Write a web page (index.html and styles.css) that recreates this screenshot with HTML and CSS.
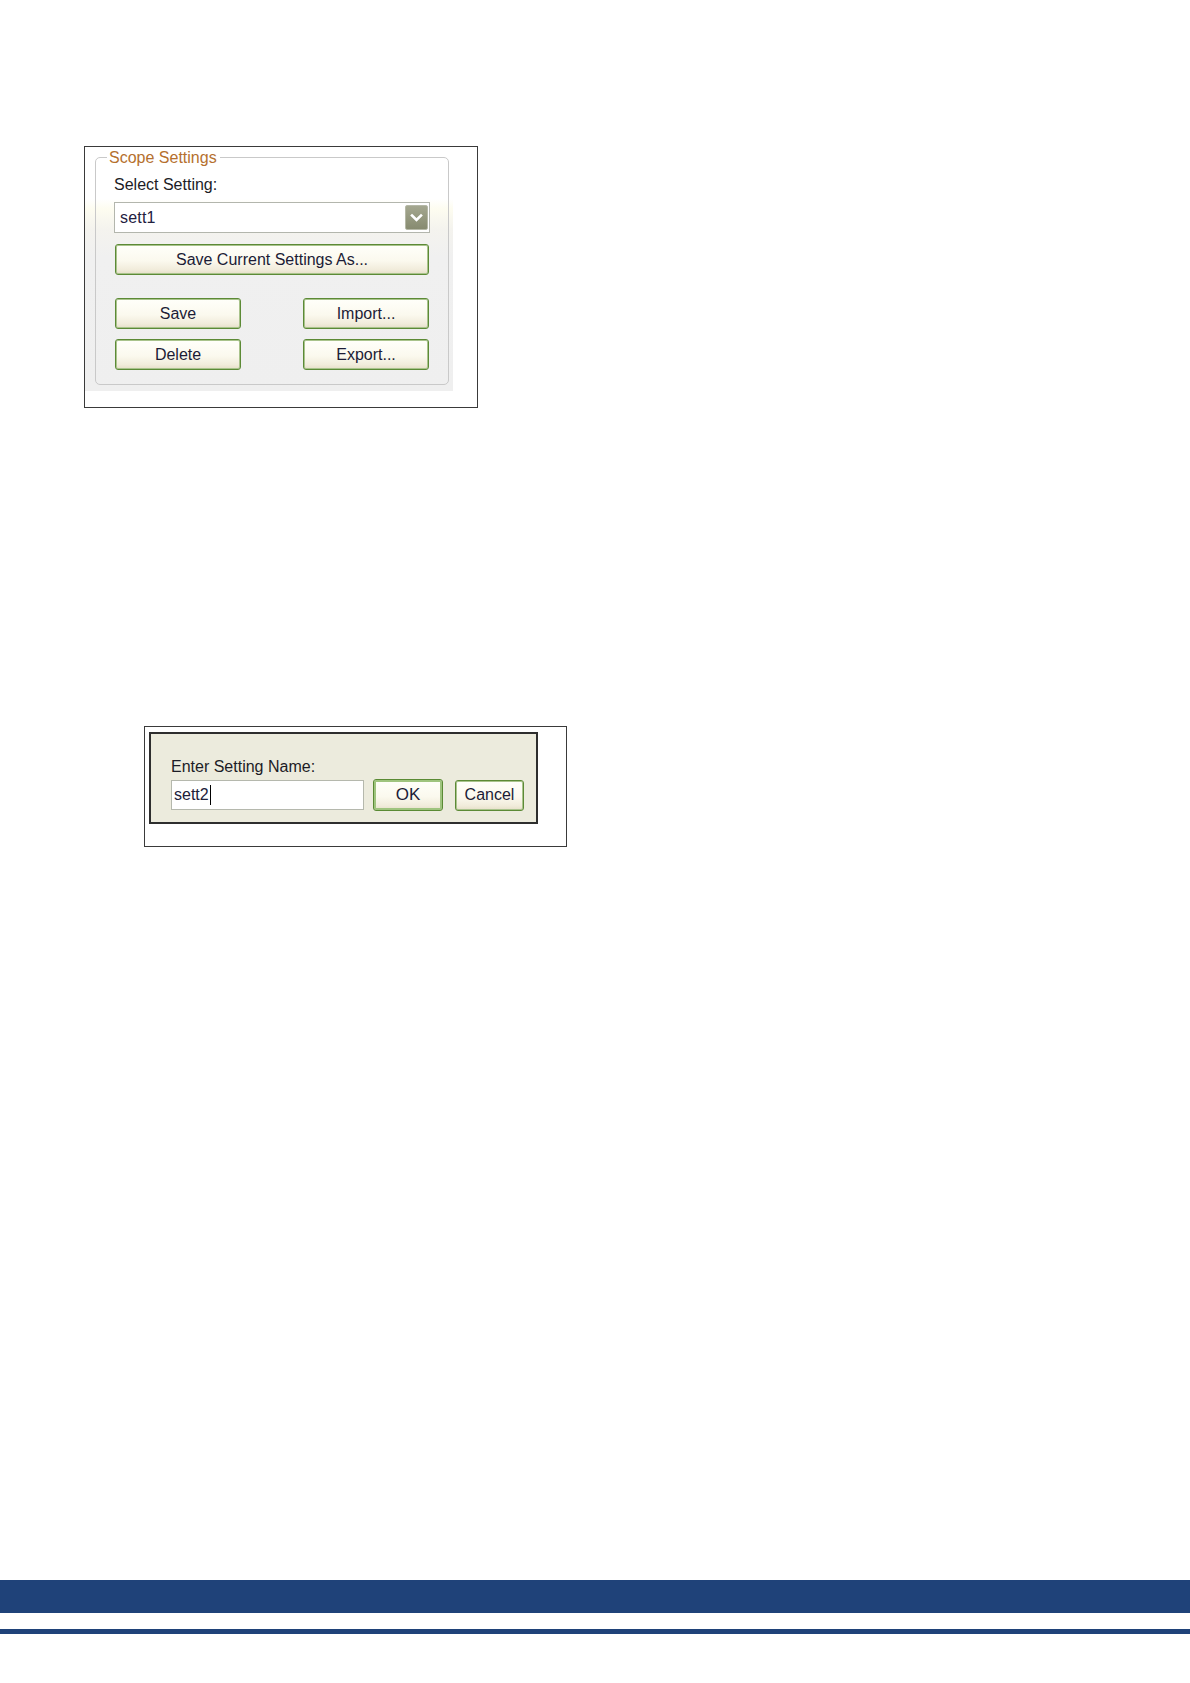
FILE: index.html
```html
<!DOCTYPE html>
<html>
<head>
<meta charset="utf-8">
<link rel="stylesheet" href="styles.css">
</head>
<body>
<div class="page">
  <div class="frame frame-scope">
    <div class="panel">
      <div class="group">
        <span class="legend">Scope Settings</span>
        <div class="label">Select Setting:</div>
        <div class="combo">
          <span class="combo-text">sett1</span>
          <span class="combo-btn">
            <svg width="13" height="10" viewBox="0 0 13 10"><path d="M2 2.5 L6.5 7 L11 2.5" fill="none" stroke="#ffffff" stroke-width="2.6" stroke-linecap="square"/></svg>
          </span>
        </div>
        <div class="btn btn-wide">Save Current Settings As...</div>
        <div class="btn-grid">
          <div class="btn">Save</div>
          <div class="btn">Import...</div>
          <div class="btn">Delete</div>
          <div class="btn">Export...</div>
        </div>
      </div>
    </div>
  </div>

  <div class="frame frame-name">
    <div class="dialog">
      <div class="label">Enter Setting Name:</div>
      <div class="name-row">
        <div class="input"><span>sett2</span><span class="caret"></span></div>
        <div class="btn btn-ok">OK</div>
        <div class="btn btn-cancel">Cancel</div>
      </div>
    </div>
  </div>
</div>
<div class="footer-bar"></div>
<div class="footer-line"></div>
</body>
</html>
```

FILE: styles.css
```css
html, body {
  margin: 0;
  padding: 0;
  background: #ffffff;
}

body {
  font-family: "Liberation Sans", Arial, sans-serif;
  font-size: 16px;
  color: #1e1e30;
}

.page {
  padding-top: 146px;
  height: 1580px;
  box-sizing: border-box;
}

.frame {
  border: 1px solid #3a3a3a;
  box-sizing: border-box;
}

.frame-scope {
  margin-left: 84px;
  width: 394px;
  height: 262px;
}

.panel {
  width: 368px;
  box-sizing: border-box;
  padding: 10px 4px 6px 10px;
  background: linear-gradient(to bottom, #ffffff 0, #ffffff 52px, #fdfcf0 62px, #f4f3ee 82px, #f0f0f0 110px, #efefef 100%);
}

.group {
  position: relative;
  width: 354px;
  box-sizing: border-box;
  border: 1px solid #c9c9c9;
  border-radius: 5px;
  padding: 17px 0 14px 18px;
}

.legend {
  position: absolute;
  left: 11px;
  top: -9px;
  padding: 0 3px 0 2px;
  background: #ffffff;
  color: #b5702e;
  line-height: 18px;
}

.label {
  line-height: 20px;
  color: #1c1c26;
}

.combo {
  margin-top: 7px;
  width: 316px;
  height: 31px;
  box-sizing: border-box;
  border: 1px solid #b3b6ad;
  background: #ffffff;
  display: flex;
  align-items: center;
  justify-content: space-between;
  padding: 0 1px 0 5px;
}

.combo-text {
  color: #22203e;
  letter-spacing: 0.2px;
}

.combo-btn {
  width: 23px;
  height: 25px;
  box-sizing: border-box;
  border: 1px solid #b5b8a6;
  border-radius: 2px;
  background: linear-gradient(to bottom, #a4a78f, #878b70);
  display: flex;
  align-items: center;
  justify-content: center;
}

.btn {
  box-sizing: border-box;
  height: 31px;
  border: 1px solid #5c8a36;
  box-shadow: inset 0 0 0 1px #a9c38c;
  border-radius: 3px;
  background: linear-gradient(to bottom, #fffffa 0, #fbf9ee 55%, #f1ecdb 85%, #e6dfc8 100%);
  display: flex;
  align-items: center;
  justify-content: center;
  color: #1c1c36;
}

.btn-wide {
  margin: 11px 0 0 1px;
  width: 314px;
}

.btn-grid {
  margin: 23px 0 0 1px;
  display: grid;
  grid-template-columns: 126px 126px;
  column-gap: 62px;
  row-gap: 10px;
}

.frame-name {
  margin-top: 318px;
  margin-left: 144px;
  width: 423px;
  height: 121px;
  padding: 5px 0 0 4px;
}

.dialog {
  width: 389px;
  height: 92px;
  box-sizing: border-box;
  border: 2px solid #2e2e2e;
  background: #ecebdd;
  padding: 23px 0 0 20px;
}

.name-row {
  margin-top: 2px;
  display: flex;
  align-items: center;
}

.input {
  width: 193px;
  height: 30px;
  box-sizing: border-box;
  border: 1px solid #b5b8ad;
  background: #ffffff;
  display: flex;
  align-items: center;
  padding-left: 2px;
  color: #20203a;
}

.caret {
  display: inline-block;
  width: 0;
  height: 20px;
  border-left: 1px solid #000000;
  margin-left: 1px;
}

.btn-ok {
  margin-left: 9px;
  width: 70px;
  height: 32px;
  border: 1px solid #5a8a34;
  box-shadow: inset 0 0 0 2px #9fc47e;
  font-size: 17px;
}

.btn-cancel {
  margin-left: 12px;
  width: 69px;
  height: 31px;
}

.footer-bar {
  height: 33px;
  background: #1f4279;
}

.footer-line {
  margin-top: 16px;
  height: 5px;
  background: #1f4279;
}
```
